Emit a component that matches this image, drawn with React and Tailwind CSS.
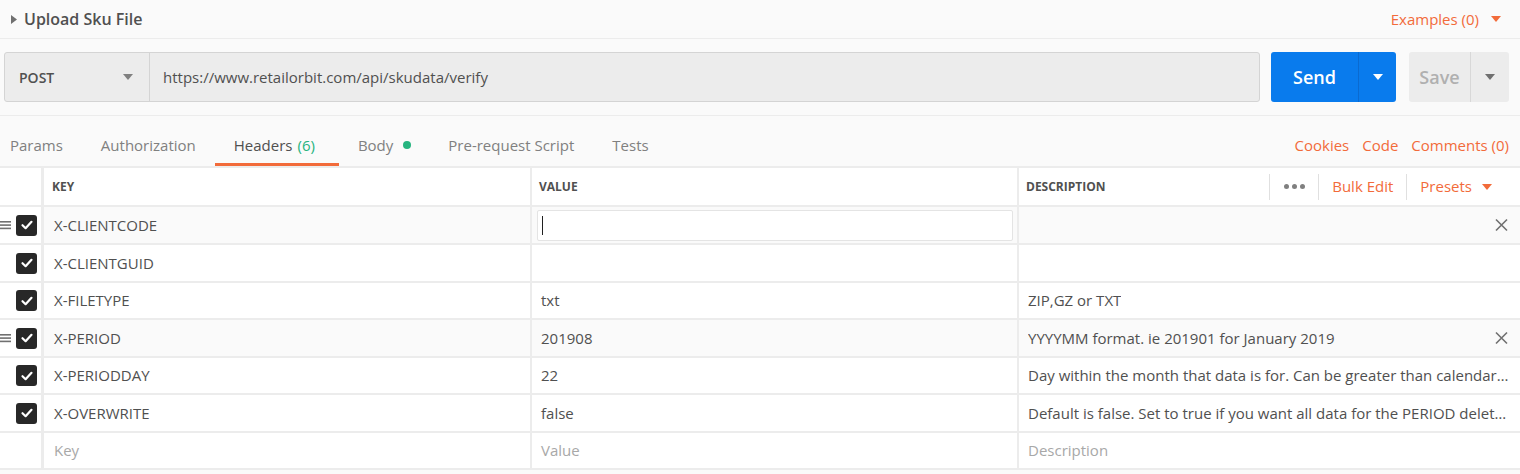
import React from "react";

const ORANGE = "text-[#f26b3a]";

function Check() {
  return (
    <div className="w-[21px] h-[21px] rounded-[3px] bg-[#282828] flex items-center justify-center">
      <svg width="14" height="14" viewBox="0 0 14 14">
        <path d="M2.5 7.2 L5.6 10.2 L11.5 3.8" fill="none" stroke="#fff" strokeWidth="2.2" strokeLinecap="round" strokeLinejoin="round" />
      </svg>
    </div>
  );
}

function Handle() {
  return (
    <svg width="11" height="10" viewBox="0 0 11 10" className="absolute left-0 top-1/2 -translate-y-1/2">
      <rect x="0" y="1" width="11" height="1.6" fill="#707070" />
      <rect x="0" y="4.3" width="11" height="1.6" fill="#707070" />
      <rect x="0" y="7.6" width="11" height="1.6" fill="#707070" />
    </svg>
  );
}

function Close() {
  return (
    <svg width="13" height="13" viewBox="0 0 13 13" className="absolute right-[12px] top-1/2 -translate-y-1/2">
      <path d="M1 1 L12 12 M12 1 L1 12" stroke="#707070" strokeWidth="1.6" />
    </svg>
  );
}

const rows = [
  { k: "X-CLIENTCODE", v: "", d: "", hover: true, input: true, h: "h-[36px]" },
  { k: "X-CLIENTGUID", v: "", d: "", h: "h-[36px]" },
  { k: "X-FILETYPE", v: "txt", d: "ZIP,GZ or TXT", h: "h-[35px]" },
  { k: "X-PERIOD", v: "201908", d: "YYYYMM format. ie 201901 for January 2019", hover: true, h: "h-[36px]" },
  { k: "X-PERIODDAY", v: "22", d: "Day within the month that data is for. Can be greater than calendar days in month", h: "h-[35px]" },
  { k: "X-OVERWRITE", v: "false", d: "Default is false. Set to true if you want all data for the PERIOD deleted before import", h: "h-[36px]" },
];

export default function App() {
  return (
    <div className="w-[1520px] h-[474px] bg-[#fafafa] text-[#505050] overflow-hidden" style={{ fontFamily: '"Open Sans", "Noto Sans", sans-serif' }}>
      {/* title bar */}
      <div className="h-[39px] flex items-center justify-between border-b border-[#ececec] pl-[11px] pr-[19px]">
        <div className="flex items-center">
          <svg width="6" height="9" viewBox="0 0 6 9" className="mr-[7px]">
            <path d="M0 0 L6 4.5 L0 9 Z" fill="#707070" />
          </svg>
          <span className="text-[16px] font-semibold text-[#505050]">Upload Sku File</span>
        </div>
        <div className={`flex items-center text-[15px] ${ORANGE}`}>
          <span>Examples (0)</span>
          <svg width="10" height="6" viewBox="0 0 10 6" className="ml-[12px]">
            <path d="M0 0 L10 0 L5 6 Z" fill="#f26b3a" />
          </svg>
        </div>
      </div>

      {/* url bar */}
      <div className="h-[77px] flex items-center pl-[4px] pr-[11px] border-b border-[#ececec]">
        <div className="flex flex-1 h-[50px] rounded-[3px] border border-[#d4d4d4] bg-[#ececec]">
          <div className="w-[145px] flex items-center justify-between pl-[14px] pr-[16px] border-r border-[#d4d4d4]">
            <span className="text-[14px] font-semibold text-[#505050]">POST</span>
            <svg width="10" height="6" viewBox="0 0 10 6">
              <path d="M0 0 L10 0 L5 6 Z" fill="#808080" />
            </svg>
          </div>
          <div className="flex-1 flex items-center pl-[13px] text-[15px] text-[#505050]">
            https://www.retailorbit.com/api/skudata/verify
          </div>
        </div>
        <div className="ml-[11px] flex h-[50px] w-[125px] rounded-[3px] bg-[#097bed] text-white">
          <div className="flex-1 flex items-center justify-center text-[18px] font-semibold">Send</div>
          <div className="w-[38px] flex items-center justify-center border-l border-[#0a6ad0]">
            <svg width="10" height="6" viewBox="0 0 10 6">
              <path d="M0 0 L10 0 L5 6 Z" fill="#fff" />
            </svg>
          </div>
        </div>
        <div className="ml-[13px] flex h-[50px] w-[100px] rounded-[3px] bg-[#ececec]">
          <div className="flex-1 flex items-center justify-center text-[18px] font-semibold text-[#b0b0b0]">Save</div>
          <div className="w-[39px] flex items-center justify-center border-l border-[#d8d8d8]">
            <svg width="10" height="6" viewBox="0 0 10 6">
              <path d="M0 0 L10 0 L5 6 Z" fill="#707070" />
            </svg>
          </div>
        </div>
      </div>

      {/* tabs */}
      <div className="h-[50px] flex items-stretch justify-between text-[15px]">
        <div className="flex items-stretch">
          <div className="pl-[10px] pr-[19px] pt-[8px] flex items-center text-[#808080]">Params</div>
          <div className="px-[19px] pt-[8px] flex items-center text-[#808080]">Authorization</div>
          <div className="pl-[19px] pr-[24px] pt-[11px] flex items-center text-[#505050] border-b-[3px] border-[#f26b3a]">
            Headers <span className="ml-[5px] text-[#26b47f]">(6)</span>
          </div>
          <div className="pl-[19px] pr-[18px] pt-[8px] flex items-center text-[#808080]">
            Body <span className="ml-[10px] w-[8px] h-[8px] rounded-full bg-[#26b47f]" />
          </div>
          <div className="px-[19px] pt-[8px] flex items-center text-[#808080]">Pre-request Script</div>
          <div className="px-[19px] pt-[8px] flex items-center text-[#808080]">Tests</div>
        </div>
        <div className={`flex items-center gap-[13px] pr-[11px] pt-[8px] ${ORANGE}`}>
          <span>Cookies</span>
          <span>Code</span>
          <span>Comments (0)</span>
        </div>
      </div>

      {/* table */}
      <div className="border-t-2 border-[#ececec] bg-white text-[15px]">
        {/* header */}
        <div className="flex h-[39px] border-b-2 border-[#ececec]">
          <div className="w-[44px] border-r-[3px] border-[#ececec]" />
          <div className="w-[488px] border-r-2 border-[#ececec] flex items-center pl-[8px] text-[12px] font-bold text-[#505050]">KEY</div>
          <div className="w-[487px] border-r-2 border-[#ececec] flex items-center pl-[7px] text-[12px] font-bold text-[#505050]">VALUE</div>
          <div className="flex-1 flex items-center pl-[7px] text-[12px] font-bold text-[#505050]">
            <span className="flex-1">DESCRIPTION</span>
            <div className="h-[26px] border-l border-[#e0e0e0] pl-[14px] pr-[13px] flex items-center gap-[3px]">
              <span className="w-[5px] h-[5px] rounded-full bg-[#808080]" />
              <span className="w-[5px] h-[5px] rounded-full bg-[#808080]" />
              <span className="w-[5px] h-[5px] rounded-full bg-[#808080]" />
            </div>
            <div className={`h-[26px] border-l border-[#e0e0e0] px-[13px] flex items-center text-[15px] font-normal ${ORANGE}`}>Bulk Edit</div>
            <div className={`h-[26px] border-l border-[#e0e0e0] pl-[13px] pr-[28px] flex items-center text-[15px] font-normal ${ORANGE}`}>
              Presets
              <svg width="10" height="6" viewBox="0 0 10 6" className="ml-[10px]">
                <path d="M0 0 L10 0 L5 6 Z" fill="#f26b3a" />
              </svg>
            </div>
          </div>
        </div>

        {rows.map((r) => {
          const bg = r.hover ? "bg-[#fafafa]" : "bg-white";
          return (
            <div key={r.k} className={`flex ${r.h} box-content border-b-2 border-[#ececec]`}>
              <div className="relative w-[44px] border-r-[3px] border-[#ececec] flex items-center pl-[16px]">
                {r.hover && <Handle />}
                <Check />
              </div>
              <div className={`w-[488px] border-r-2 border-[#ececec] flex items-center pl-[10px] ${bg}`}>{r.k}</div>
              <div className={`w-[487px] border-r-2 border-[#ececec] flex items-center ${r.input ? "pl-[5px] pr-[4px]" : "pl-[9px]"} ${bg}`}>
                {r.input ? (
                  <div className="w-full h-[31px] bg-white border border-[#e4e4e4] rounded-[2px] flex items-center pl-[4px]">
                    <span className="w-px h-[19px] bg-[#202020]" />
                  </div>
                ) : (
                  r.v
                )}
              </div>
              <div className={`relative flex-1 min-w-0 flex items-center pl-[9px] pr-[10px] ${bg}`}>
                <span className="truncate">{r.d}</span>
                {r.hover && <Close />}
              </div>
            </div>
          );
        })}

        <div className="flex h-[35px] box-content border-b-2 border-[#ececec] text-[#a8a8a8]">
          <div className="w-[44px] border-r-[3px] border-[#ececec]" />
          <div className="w-[488px] border-r-2 border-[#ececec] flex items-center pl-[10px]">Key</div>
          <div className="w-[487px] border-r-2 border-[#ececec] flex items-center pl-[9px]">Value</div>
          <div className="flex-1 flex items-center pl-[9px]">Description</div>
        </div>
      </div>
    </div>
  );
}
